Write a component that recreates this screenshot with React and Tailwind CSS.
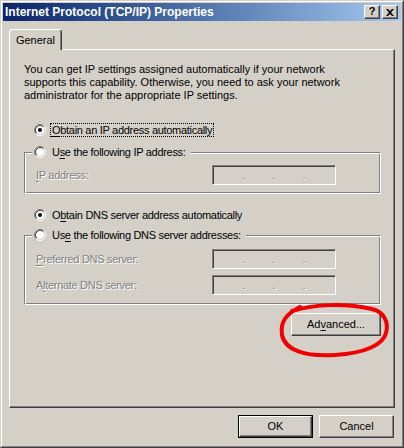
import React from 'react';

const face = 'bg-[#d4d0c8]';
const etch = '[text-shadow:1px_1px_0_#fff]';

function Radio({ checked }) {
  return (
    <svg width="12" height="12" viewBox="0 0 12 12" className="shrink-0">
      <circle cx="6" cy="6" r="4.5" fill="#fff" />
      <path d="M2.11 9.89 A5.5 5.5 0 0 1 9.89 2.11" stroke="#808080" fill="none" />
      <path d="M9.89 2.11 A5.5 5.5 0 0 1 2.11 9.89" stroke="#fff" fill="none" />
      <path d="M2.82 9.18 A4.5 4.5 0 0 1 9.18 2.82" stroke="#404040" fill="none" />
      <path d="M9.18 2.82 A4.5 4.5 0 0 1 2.82 9.18" stroke="#d4d0c8" fill="none" />
      {checked && <circle cx="6" cy="6" r="2" fill="#000" />}
    </svg>
  );
}

function U({ children }) {
  return <span className="underline underline-offset-[2px]">{children}</span>;
}

function RadioRow({ checked, focus, children, legend }) {
  return (
    <div className={`flex items-center h-[16px] gap-[4px] ${legend ? `self-start -mt-[9px] ml-[7px] px-[2px] pr-[3px] ${face}` : 'pl-[10px]'}`}>
      <Radio checked={checked} />
      <span className={`border px-[1px] leading-[12px] tracking-[-0.3px] ${focus ? 'border-dotted border-black' : 'border-transparent'}`}>
        {children}
      </span>
    </div>
  );
}

function IpField() {
  return (
    <div className={`w-[124px] h-[20px] shrink-0 border border-t-[#808080] border-l-[#808080] border-b-white border-r-white shadow-[inset_1px_1px_0_#404040,inset_-1px_-1px_0_#d4d0c8] ${face} flex items-center leading-[18px] text-[#808080] ${etch} pl-[28px]`}>
      <span className="w-[6px] text-center">.</span>
      <span className="w-[24px]" />
      <span className="w-[6px] text-center">.</span>
      <span className="w-[24px]" />
      <span className="w-[6px] text-center">.</span>
    </div>
  );
}

function FieldRow({ children, className = '' }) {
  return (
    <div className={`flex items-center h-[20px] ${className}`}>
      <span className={`w-[187px] pl-[11px] tracking-[-0.3px] text-[#808080] ${etch}`}>{children}</span>
      <IpField />
    </div>
  );
}

function Group({ className = '', children }) {
  return (
    <div className={`flex flex-col border border-t-[#808080] border-l-[#808080] border-b-white border-r-white shadow-[inset_1px_1px_0_#fff,inset_-1px_-1px_0_#808080] ${className}`}>
      {children}
    </div>
  );
}

function Btn({ w = 'w-[75px]', def, children }) {
  const bevel = `w-full h-full ${face} border border-t-white border-l-white border-r-[#404040] border-b-[#404040] shadow-[inset_-1px_-1px_0_#808080] flex items-center justify-center`;
  if (def) {
    return (
      <div className={`${w} h-[23px] border border-black`}>
        <div className={bevel}>{children}</div>
      </div>
    );
  }
  return <div className={`${w} h-[23px]`}><div className={bevel}>{children}</div></div>;
}

function CaptionBtn({ children }) {
  return (
    <div className={`w-[16px] h-[14px] ${face} border border-t-white border-l-white border-r-[#404040] border-b-[#404040] shadow-[inset_-1px_-1px_0_#808080] flex items-center justify-center`}>
      {children}
    </div>
  );
}

export default function App() {
  return (
    <div className="relative w-[404px] h-[448px] font-['Liberation_Sans',Arial,sans-serif] text-[11px] text-black">
      <div className="h-full border border-t-[#d4d0c8] border-l-[#d4d0c8] border-r-[#404040] border-b-[#404040]">
        <div className={`h-full border border-t-white border-l-white border-r-[#808080] border-b-[#808080] ${face} p-[1px] flex flex-col`}>
          {/* title bar */}
          <div className="h-[18px] flex items-center pl-[2px] pr-[3px] bg-linear-to-r from-[#0a246a] to-[#a6caf0]">
            <span className="flex-1 text-white font-bold text-[12px] leading-none">Internet Protocol (TCP/IP) Properties</span>
            <div className="flex gap-[2px]">
              <CaptionBtn>
                <span className="font-bold text-[11px] leading-none -mt-[1px]">?</span>
              </CaptionBtn>
              <CaptionBtn>
                <svg width="8" height="7" viewBox="0 0 8 7">
                  <path d="M0 0h2l2 2 2-2h2L5 3.5 8 7H6L4 5 2 7H0l3-3.5z" fill="#000" />
                </svg>
              </CaptionBtn>
            </div>
          </div>

          <div className="flex flex-col px-[6px] pt-[8px]">
            {/* tab */}
            <div className={`relative z-10 -mb-[1px] w-[53px] h-[21px] ${face} border-t border-l border-white border-r border-r-[#404040] rounded-t-[3px] shadow-[inset_-1px_0_0_#808080] flex items-center justify-center`}>
              General
            </div>

            {/* panel */}
            <div className="h-[359px] border border-t-white border-l-white border-r-[#404040] border-b-[#404040] shadow-[inset_-1px_-1px_0_#808080] flex flex-col pl-[14px] pr-[13px]">
              <p className="pt-[13px] leading-[13px]">
                You can get IP settings assigned automatically if your network<br />
                supports this capability. Otherwise, you need to ask your network<br />
                administrator for the appropriate IP settings.
              </p>

              <div className="mt-[20px]">
                <RadioRow checked focus><U>O</U>btain an IP address automatically</RadioRow>
              </div>

              <Group className="mt-[14px] pb-[8px]">
                <RadioRow legend>U<U>s</U>e the following IP address:</RadioRow>
                <FieldRow className="mt-[5px]"><U>I</U>P address:</FieldRow>
              </Group>

              <div className="mt-[13px]">
                <RadioRow checked>O<U>b</U>tain DNS server address automatically</RadioRow>
              </div>

              <Group className="mt-[12px] pb-[9px]">
                <RadioRow legend>Us<U>e</U> the following DNS server addresses:</RadioRow>
                <FieldRow className="mt-[6px]"><U>P</U>referred DNS server:</FieldRow>
                <FieldRow className="mt-[6px]">A<U>l</U>ternate DNS server:</FieldRow>
              </Group>

              <div className="mt-[8px] flex justify-end">
                <Btn w="w-[90px]">Ad<U>v</U>anced...</Btn>
              </div>
            </div>

            {/* dialog buttons */}
            <div className="mt-[7px] flex justify-end gap-[6px] pr-[1px]">
              <Btn def>OK</Btn>
              <Btn>Cancel</Btn>
            </div>
          </div>
        </div>
      </div>

      {/* red annotation loop */}
      <svg className="absolute top-0 left-0 pointer-events-none" width="404" height="448" viewBox="0 0 404 448">
        <path
          d="M292 311 C315 304 345 303 372 309 C384 312 389 322 386 333 C383 345 365 353 335 355 C305 357 285 350 282 335 C280 322 286 314 300 307"
          stroke="#f00000"
          strokeWidth="4"
          fill="none"
          strokeLinecap="round"
          strokeLinejoin="round"
        />
      </svg>
    </div>
  );
}
